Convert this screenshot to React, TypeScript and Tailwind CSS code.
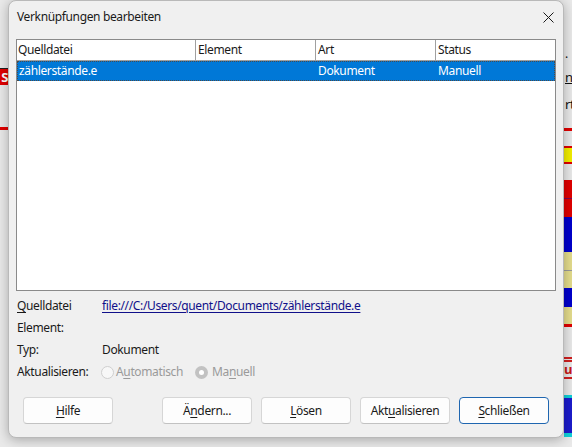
import React from "react";

const U = ({ children }: { children: React.ReactNode }) => (
  <span className="underline decoration-1 underline-offset-[2px]">{children}</span>
);

function LeftStrip() {
  return (
    <div className="flex w-[8px] flex-col">
      <div className="h-[68px]" />
      <div className="h-[1px] bg-[#202020]" />
      <div className="flex h-[16px] items-center justify-end overflow-hidden bg-[#e00000] text-[13px] font-bold leading-none text-white">
        S
      </div>
      <div className="h-[42px]" />
      <div className="h-[3px] bg-[#e00000]" />
    </div>
  );
}

function RightStrip() {
  return (
    <div className="flex w-[8px] flex-col overflow-hidden text-[12px] leading-none text-[#111]">
      <div className="h-[48px]" />
      <div className="h-[12px] pl-[1px]">.</div>
      <div className="h-[10px]" />
      <div className="h-[16px] whitespace-nowrap pl-[1px] text-[13px] leading-[14px] underline decoration-1 underline-offset-[1px]">ni</div>
      <div className="h-[11px]" />
      <div className="h-[15px] whitespace-nowrap pl-[1px] text-[13px] leading-[14px]">rt</div>
      <div className="h-[16px]" />
      <div className="h-[3px] bg-[#e00000]" />
      <div className="h-[15px]" />
      <div className="h-[2px] bg-[#e00000]" />
      <div className="h-[14px] bg-[#f2ee00]" />
      <div className="h-[2px] bg-[#e00000]" />
      <div className="h-[16px]" />
      <div className="h-[18px] bg-[#e00000]" />
      <div className="h-[1px] bg-[#7a0a5a]" />
      <div className="h-[18px] bg-[#e00000]" />
      <div className="h-[35px] bg-[#0000cc]" />
      <div className="h-[18px] bg-[#e4dc8c]" />
      <div className="h-[1px] bg-[#9a9a9a]" />
      <div className="h-[17px] bg-[#e4dc8c]" />
      <div className="h-[19px] bg-[#0000cc]" />
      <div className="h-[17px] bg-[#e4dc8c]" />
      <div className="h-[3px] bg-[#e00000]" />
      <div className="h-[30px]" />
      <div className="h-[2px] bg-[#d02020]" />
      <div className="h-[1px]" />
      <div className="h-[2px] bg-[#d02020]" />
      <div className="h-[15px] whitespace-nowrap text-[13px] font-bold leading-[15px] text-[#c81818]">u</div>
      <div className="h-[2px] bg-[#d02020]" />
      <div className="h-[16px]" />
      <div className="h-[3px] bg-[#10d0d8]" />
      <div className="h-[35px] bg-[#1c1ccc]" />
      <div className="h-[4px] bg-[#10d0d8]" />
    </div>
  );
}

function Radio({ checked }: { checked?: boolean }) {
  return checked ? (
    <span className="flex h-[13px] w-[13px] items-center justify-center rounded-full bg-[#c2c2c2]">
      <span className="h-[5px] w-[5px] rounded-full bg-white" />
    </span>
  ) : (
    <span className="h-[13px] w-[13px] rounded-full border border-[#cfcfcf] bg-[#f7f7f7]" />
  );
}

function Btn({ children, primary }: { children: React.ReactNode; primary?: boolean }) {
  return (
    <div
      className={
        "flex h-[27px] w-[90px] items-center justify-center rounded-[4px] bg-[#fdfdfd] text-[#1a1a1a] " +
        (primary
          ? "border border-[#1f66b0]"
          : "border border-[#d6d6d6] border-b-[#c2c2c2]")
      }
    >
      {children}
    </div>
  );
}

export default function App() {
  return (
    <div
      className="relative h-[447px] w-[572px] overflow-hidden bg-[#e9e9e9] text-[12px] tracking-[-0.36px]"
      style={{ fontFamily: '"Noto Sans", "Segoe UI", sans-serif' }}
    >
      <div className="flex h-full justify-between">
        <LeftStrip />
        <RightStrip />
      </div>

      <div className="absolute left-[8px] top-0 flex h-[438px] w-[556px] flex-col rounded-[8px] border border-[#b9b9b9] bg-[#f0f0f0] text-[#1a1a1a] shadow-[0_2px_12px_rgba(0,0,0,0.28)]">
        {/* title bar */}
        <div className="flex h-[31px] items-center justify-between pl-[8px] pr-[9px]">
          <span className="text-[12px]">Verknüpfungen bearbeiten</span>
          <svg width="11" height="11" viewBox="0 0 11 11" className="mt-[1px]">
            <path d="M0.5 0.5 L10.5 10.5 M10.5 0.5 L0.5 10.5" stroke="#1a1a1a" strokeWidth="1" fill="none" />
          </svg>
        </div>

        {/* table */}
        <div className="ml-[7px] mt-[7px] flex h-[252px] w-[540px] flex-col border border-[#8a8a8a] bg-white">
          <div className="flex h-[21px] border-b border-[#a0a0a0] bg-white">
            <div className="flex w-[179px] items-center border-r border-[#a0a0a0] pl-[1px]">Quelldatei</div>
            <div className="flex w-[120px] items-center border-r border-[#a0a0a0] pl-[2px]">Element</div>
            <div className="flex w-[120px] items-center border-r border-[#a0a0a0] pl-[2px]">Art</div>
            <div className="flex flex-1 items-center pl-[2px]">Status</div>
          </div>
          <div className="flex h-[20px] border border-dotted border-[#4a4a4a] bg-[#0078d7] text-white">
            <div className="flex w-[178px] items-center pl-[1px]">zählerstände.e</div>
            <div className="flex w-[120px] items-center pl-[2px]" />
            <div className="flex w-[120px] items-center pl-[2px]">Dokument</div>
            <div className="flex flex-1 items-center pl-[2px]">Manuell</div>
          </div>
        </div>

        {/* details */}
        <div className="mt-[4px] flex flex-col pl-[8px]">
          <div className="flex h-[22px] items-center">
            <div className="w-[85px]">
              <U>Q</U>uelldatei
            </div>
            <span className="text-[#10108a] underline decoration-1 underline-offset-[2px]">
              file:///C:/Users/quent/Documents/zählerstände.e
            </span>
          </div>
          <div className="flex h-[22px] items-center">
            <div className="w-[85px]">Element:</div>
          </div>
          <div className="flex h-[22px] items-center">
            <div className="w-[85px]">Typ:</div>
            <span>Dokument</span>
          </div>
          <div className="flex h-[22px] items-center">
            <div className="w-[84px]">Aktualisieren:</div>
            <div className="flex items-center text-[#9a9a9a]">
              <Radio />
              <span className="ml-[2px]">
                A<U>u</U>tomatisch
              </span>
              <span className="ml-[12px]">
                <Radio checked />
              </span>
              <span className="ml-[4px]">
                Ma<U>n</U>uell
              </span>
            </div>
          </div>
        </div>

        {/* buttons */}
        <div className="mt-[14px] flex pl-[14px]">
          <Btn>
            <U>H</U>ilfe
          </Btn>
          <div className="ml-[49px] flex gap-[9px]">
            <Btn>
              Ä<U>n</U>dern...
            </Btn>
            <Btn>
              <U>L</U>ösen
            </Btn>
            <Btn>
              Akt<U>u</U>alisieren
            </Btn>
            <Btn primary>
              <U>S</U>chließen
            </Btn>
          </div>
        </div>
      </div>
    </div>
  );
}
